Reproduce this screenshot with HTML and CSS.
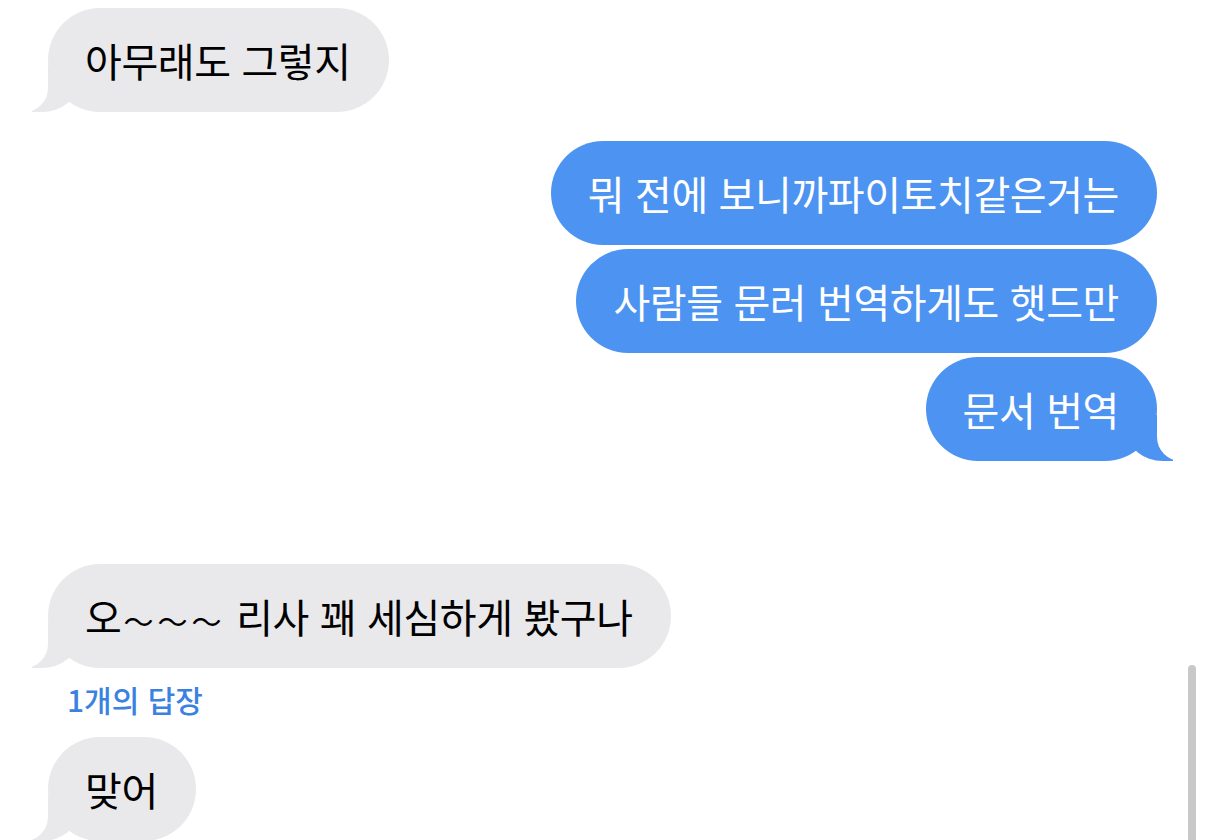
FILE: index.html
```html
<!DOCTYPE html>
<html lang="ko">
<head>
    <meta charset="UTF-8">
    <meta name="viewport" content="width=device-width, initial-scale=1.0">
    <title>메시지</title>
    <link rel="stylesheet" href="styles.css">
</head>
<body>
    <div class="chat">
        <div class="row in first">
            <div class="bubble in tail">아무래도 그렇지</div>
        </div>

        <div class="row out group-start">
            <div class="bubble out">뭐 전에 보니까파이토치같은거는</div>
        </div>
        <div class="row out">
            <div class="bubble out">사람들 문러 번역하게도 햇드만</div>
        </div>
        <div class="row out">
            <div class="bubble out tail">문서 번역</div>
        </div>

        <div class="row in group-start far">
            <div class="bubble in tail">오<span class="tildes">～～～</span> 리사 꽤 세심하게 봤구나</div>
        </div>
        <div class="replies">1개의 답장</div>
        <div class="row in">
            <div class="bubble in tail">맞어</div>
        </div>
    </div>

    <div class="scrollbar"></div>
</body>
</html>
```

FILE: styles.css
```css
* {
    margin: 0;
    padding: 0;
    box-sizing: border-box;
}

body {
    background: #ffffff;
    font-family: "Noto Sans CJK KR", "Noto Sans", sans-serif;
    height: 840px;
    overflow: hidden;
}

.chat {
    display: flex;
    flex-direction: column;
    padding: 8px 49px 0 48px;
}

.row {
    display: flex;
    margin-top: 4px;
}

.row.in {
    justify-content: flex-start;
}

.row.out {
    justify-content: flex-end;
}

.row.first {
    margin-top: 0;
}

.row.group-start {
    margin-top: 29px;
}

.row.group-start.far {
    margin-top: 103px;
}

/* 말풍선 */
.bubble {
    position: relative;
    padding: 28px 38px 28px 37px;
    font-size: 40px;
    line-height: 48px;
    letter-spacing: -0.4px;
    border-radius: 52px;
    white-space: nowrap;
}

.bubble .tildes {
    font-size: 30px;
    line-height: 1;
    letter-spacing: 4px;
    margin-left: 2px;
}

.bubble.in {
    background: #e9e9eb;
    color: #000000;
}

.bubble.out {
    background: #4d93f1;
    color: #ffffff;
}

/* 꼬리 */
.bubble.tail::before,
.bubble.tail::after {
    content: "";
    position: absolute;
    bottom: 0;
    height: 46px;
}

.bubble.in.tail::before {
    left: -16px;
    width: 46px;
    background: #e9e9eb;
    border-bottom-right-radius: 36px 30px;
}

.bubble.in.tail::after {
    left: -60px;
    width: 60px;
    background: #ffffff;
    border-bottom-right-radius: 24px;
}

.bubble.out.tail::before {
    right: -16px;
    width: 46px;
    background: #4d93f1;
    border-bottom-left-radius: 36px 30px;
}

.bubble.out.tail::after {
    right: -60px;
    width: 60px;
    background: #ffffff;
    border-bottom-left-radius: 24px;
}

.replies {
    margin: 11px 0 18px 19px;
    font-size: 30px;
    line-height: 40px;
    font-weight: 500;
    color: #3b82e0;
}

.replies + .row {
    margin-top: 0;
}

.scrollbar {
    position: fixed;
    right: 10px;
    top: 665px;
    bottom: 0;
    width: 8px;
    background: #c8c8c8;
    border-radius: 4px 4px 0 0;
}
```
